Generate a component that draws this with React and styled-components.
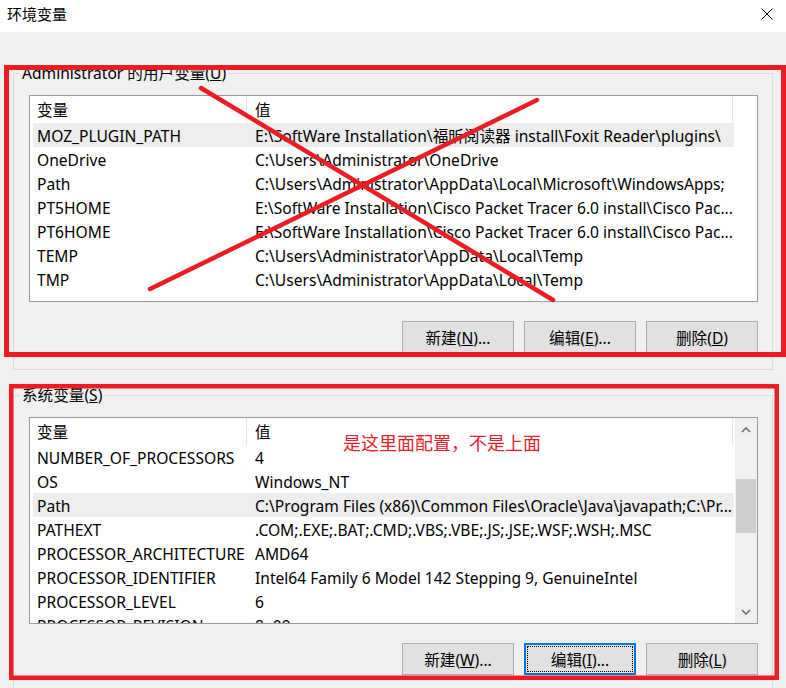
import styled, { createGlobalStyle } from "styled-components";

const GlobalStyle = createGlobalStyle`
  html, body {
    margin: 0;
    padding: 0;
    background: #f0f0f0;
  }
  body {
    font-family: "Segoe UI", "Noto Sans", "Noto Sans CJK SC", sans-serif;
  }
`;

const Window = styled.div`
  position: relative;
  width: 786px;
  height: 688px;
  overflow: hidden;
  background: #f0f0f0;
  color: #000;
  font-size: 15.6px;
`;

const TitleBar = styled.div`
  height: 32px;
  box-sizing: border-box;
  background: #fff;
  display: flex;
  align-items: center;
  justify-content: space-between;
  padding: 0 13px 5px 7px;
`;

const Title = styled.span`
  font-size: 15px;
  line-height: 18px;
`;

const Content = styled.div`
  display: flex;
  flex-direction: column;
  gap: 16px;
  padding: 32px 13px 0;
`;

const Group = styled.fieldset`
  margin: 0;
  padding: 0;
  min-width: 0;
  border: 1px solid #dcdcdc;
`;

const Legend = styled.legend`
  margin-left: 6px;
  padding: 0 2px;
  line-height: 18px;
  font-size: 15.6px;
`;

const GroupInner = styled.div`
  padding: 13px 14px 16px 15px;
`;

const List = styled.div`
  height: 207px;
  box-sizing: border-box;
  border: 1px solid #9a9a9a;
  background: #fff;
  display: flex;
  overflow: hidden;
`;

const Table = styled.div`
  flex: 1;
  min-width: 0;
`;

const Header = styled.div`
  height: 27px;
  display: flex;
`;

const HeaderCell = styled.div`
  width: ${p => p.$width}px;
  box-sizing: border-box;
  border-right: 1px solid #e5e5e5;
  padding-left: ${p => p.$pad}px;
  display: flex;
  align-items: center;
`;

const Row = styled.div`
  height: 24px;
  width: 701px;
  margin-left: 3px;
  box-sizing: border-box;
  padding-top: 1px;
  display: flex;
  align-items: center;
  background: ${p => (p.$selected ? "#ededed" : "transparent")};
`;

const NameCell = styled.div`
  width: 214px;
  flex-shrink: 0;
  box-sizing: border-box;
  padding-left: 4px;
  white-space: nowrap;
  overflow: hidden;
`;

const ValueCell = styled.div`
  flex: 1;
  min-width: 0;
  padding: 0 0 0 8px;
  white-space: nowrap;
  overflow: hidden;
  text-overflow: ellipsis;
`;

const ScrollBar = styled.div`
  width: 22px;
  flex-shrink: 0;
  background: #f0f0f0;
  display: flex;
  flex-direction: column;
`;

const Arrow = styled.div`
  height: ${p => p.$h}px;
  display: flex;
  align-items: center;
  justify-content: center;
`;

const Track = styled.div`
  flex: 1;
  padding-top: 37px;
`;

const Thumb = styled.div`
  height: 54px;
  margin: 0 1px;
  background: #cdcdcd;
`;

const ButtonRow = styled.div`
  display: flex;
  justify-content: flex-end;
  gap: 10px;
  margin-top: 19px;
`;

const Button = styled.button`
  width: 112px;
  height: 32px;
  box-sizing: border-box;
  padding: 0;
  font: inherit;
  font-size: 15.6px;
  color: #000;
  background: #e1e1e1;
  border: 1px solid #adadad;
  box-shadow: ${p => (p.$focused ? "inset 0 0 0 1px #0078d7" : "none")};
  border-color: ${p => (p.$focused ? "#0078d7" : "#adadad")};
  outline: ${p => (p.$focused ? "1px dotted #000" : "none")};
  outline-offset: -4px;
`;

const Overlay = styled.svg`
  position: absolute;
  left: 0;
  top: 0;
  pointer-events: none;
`;

const Note = styled.span`
  position: absolute;
  left: 343px;
  top: 432px;
  font-family: "Noto Sans CJK SC", sans-serif;
  font-size: 18px;
  line-height: 20px;
  color: #e8202a;
`;

const userVars = [
  ["MOZ_PLUGIN_PATH", "E:\\SoftWare Installation\\福昕阅读器 install\\Foxit Reader\\plugins\\", true],
  ["OneDrive", "C:\\Users\\Administrator\\OneDrive"],
  ["Path", "C:\\Users\\Administrator\\AppData\\Local\\Microsoft\\WindowsApps;"],
  ["PT5HOME", "E:\\SoftWare Installation\\Cisco Packet Tracer 6.0 install\\Cisco Pac..."],
  ["PT6HOME", "E:\\SoftWare Installation\\Cisco Packet Tracer 6.0 install\\Cisco Pac..."],
  ["TEMP", "C:\\Users\\Administrator\\AppData\\Local\\Temp"],
  ["TMP", "C:\\Users\\Administrator\\AppData\\Local\\Temp"],
];

const systemVars = [
  ["NUMBER_OF_PROCESSORS", "4"],
  ["OS", "Windows_NT"],
  ["Path", "C:\\Program Files (x86)\\Common Files\\Oracle\\Java\\javapath;C:\\Pr...", true],
  ["PATHEXT", ".COM;.EXE;.BAT;.CMD;.VBS;.VBE;.JS;.JSE;.WSF;.WSH;.MSC"],
  ["PROCESSOR_ARCHITECTURE", "AMD64"],
  ["PROCESSOR_IDENTIFIER", "Intel64 Family 6 Model 142 Stepping 9, GenuineIntel"],
  ["PROCESSOR_LEVEL", "6"],
  ["PROCESSOR_REVISION", "8e09"],
];

function Chevron({ down }) {
  return (
    <svg width="10" height="6" viewBox="0 0 10 6">
      <polyline
        points={down ? "1,1 5,5 9,1" : "1,5 5,1 9,5"}
        fill="none"
        stroke="#606060"
        strokeWidth="1.4"
      />
    </svg>
  );
}

function VarList({ rows, scroll }) {
  return (
    <List>
      <Table>
        <Header>
          <HeaderCell $width={217} $pad={7}>变量</HeaderCell>
          <HeaderCell $width={486} $pad={8}>值</HeaderCell>
        </Header>
        {rows.map(([name, value, selected]) => (
          <Row key={name} $selected={selected}>
            <NameCell>{name}</NameCell>
            <ValueCell>{value}</ValueCell>
          </Row>
        ))}
      </Table>
      {scroll && (
        <ScrollBar>
          <Arrow $h={24}><Chevron /></Arrow>
          <Track><Thumb /></Track>
          <Arrow $h={23}><Chevron down /></Arrow>
        </ScrollBar>
      )}
    </List>
  );
}

function Buttons({ keys, focused }) {
  return (
    <ButtonRow>
      <Button>新建(<u>{keys[0]}</u>)...</Button>
      <Button $focused={focused}>编辑(<u>{keys[1]}</u>)...</Button>
      <Button>删除(<u>{keys[2]}</u>)</Button>
    </ButtonRow>
  );
}

export default function App() {
  return (
    <Window>
      <GlobalStyle />
      <TitleBar>
        <Title>环境变量</Title>
        <svg width="12" height="12" viewBox="0 0 12 12">
          <path d="M0.5 0.5 L11.5 11.5 M11.5 0.5 L0.5 11.5" stroke="#000" strokeWidth="1" />
        </svg>
      </TitleBar>
      <Content>
        <Group>
          <Legend>Administrator 的用户变量(<u>U</u>)</Legend>
          <GroupInner>
            <VarList rows={userVars} />
            <Buttons keys={["N", "E", "D"]} />
          </GroupInner>
        </Group>
        <Group>
          <Legend>系统变量(<u>S</u>)</Legend>
          <GroupInner>
            <VarList rows={systemVars} scroll />
            <Buttons keys={["W", "I", "L"]} focused />
          </GroupInner>
        </Group>
      </Content>

      <Overlay width="786" height="688" viewBox="0 0 786 688">
        <rect x="6.5" y="67.5" width="777" height="287" fill="none" stroke="#ed1c24" strokeWidth="5" />
        <rect x="11.25" y="386.25" width="765.5" height="291.5" fill="none" stroke="#ed1c24" strokeWidth="4.5" />
        <line x1="201" y1="88" x2="553" y2="300" stroke="#ed1c24" strokeWidth="4.5" strokeLinecap="round" />
        <line x1="537" y1="100" x2="150" y2="289" stroke="#ed1c24" strokeWidth="4.5" strokeLinecap="round" />
      </Overlay>
      <Note>是这里面配置，不是上面</Note>
    </Window>
  );
}
